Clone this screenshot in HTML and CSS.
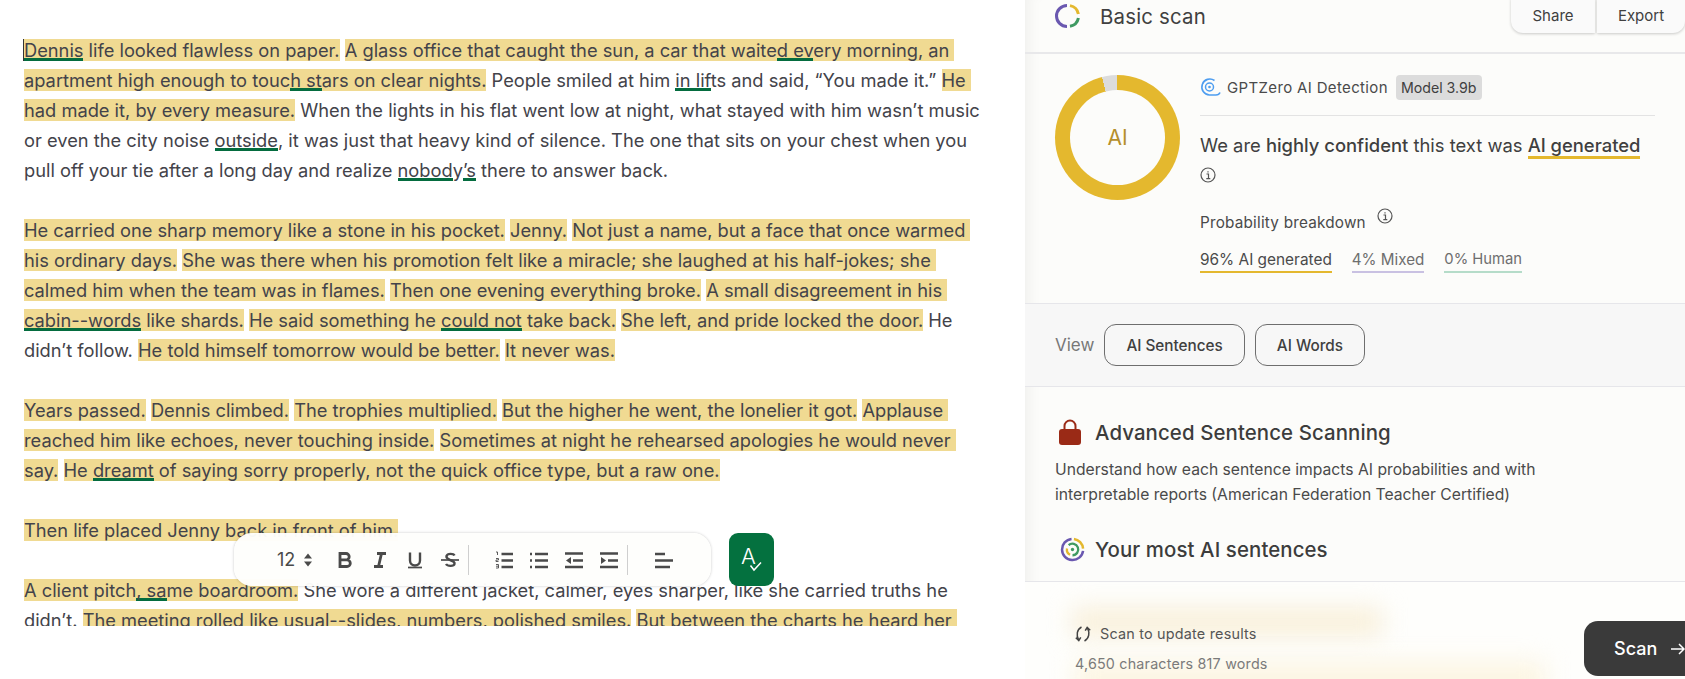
FILE: index.html
```html
<!DOCTYPE html>
<html lang="en">
<head>
<meta charset="utf-8">
<title>Basic scan</title>
<link rel="stylesheet" href="styles.css">
</head>
<body>
<div class="page">
  <main class="editor">
    <div class="doc">
      <p><span class="hl"><u class="g caret">Dennis</u> life looked flawless on paper.</span> <span class="hl">A glass office that caught the sun, a car that waite<u class="g">d ev</u>ery morning, an<i class="tr"></i> apartment high enough to touc<u class="g">h st</u>ars on clear nights.</span> People smiled at him <u class="g">in lif</u>ts and said, “You made it.” <span class="hl">He<i class="tr"></i> had made it, by every measure.</span> When the lights in his flat went low at night, what stayed with him wasn’t music or even the city noise <u class="g">outside</u>, it was just that heavy kind of silence. The one that sits on your chest when you pull off your tie after a long day and realize <u class="g">nobod</u>y<u class="g">’s</u> there to answer back.</p>
      <p><span class="hl">He carried one sharp memory like a stone in his pocket.</span> <span class="hl">Jenny.</span> <span class="hl">Not just a name, but a face that once warmed<i class="tr"></i> his ordinary days.</span> <span class="hl">She was there when his promotion felt like a miracle; she laughed at his half-jokes; she<i class="tr"></i> calmed him when the team was in flames.</span> <span class="hl">Then one evening everything broke.</span> <span class="hl">A small disagreement in his<i class="tr"></i> <u class="g">cabin--words</u> like shards.</span> <span class="hl">He said something he <u class="g">could not</u> take back.</span> <span class="hl">She left, and pride locked the door.</span> He didn’t follow. <span class="hl">He told himself tomorrow would be better.</span> <span class="hl">It never was.</span></p>
      <p><span class="hl">Years passed.</span> <span class="hl">Dennis climbed.</span> <span class="hl">The trophies multiplied.</span> <span class="hl">But the higher he went, the lonelier it got.</span> <span class="hl">Applause<i class="tr"></i> reached him like echoes, never touching inside.</span> <span class="hl">Sometimes at night he rehearsed apologies he would never<i class="tr"></i> say.</span> <span class="hl">He <u class="g">dreamt</u> of saying sorry properly, not the quick office type, but a raw one.</span></p>
      <p><span class="hl">Then life placed Jenny back in front of him.</span></p>
      <p><span class="hl">A client pitch<u class="g">, sa</u>me boardroom.</span> She wore a different jacket, calmer, eyes sharper, like she carried truths he didn’t. <span class="hl">The meeting rolled like usual--slides, numbers, polished smiles.</span> <span class="hl">But between the charts he heard her<i class="tr"></i></span></p>
    </div>

    <div class="toolbar">
      <span class="size">12</span>
      <svg class="updown" viewBox="0 0 10 16"><path d="M5 1.500l4 5H1zM5 14.500l4-5H1z"/></svg>
      <span class="tools tools-a">
        <svg class="ic" viewBox="0 0 18 18"><path d="M4 2.500h6a3.200 3.200 0 0 1 0 6.400H4zM4 8.900h7a3.300 3.300 0 0 1 0 6.600H4z" class="st bold"/></svg>
        <svg class="ic" viewBox="0 0 18 18"><path d="M6 2.500h9M3 15.500h9M10.500 2.500l-3 13" class="st bold"/></svg>
        <svg class="ic" viewBox="0 0 18 18"><path d="M4 1.500v8a5 5 0 0 0 10 0v-8" class="st"/><path d="M2 16.500h14" class="st thin"/></svg>
        <svg class="ic" viewBox="0 0 18 18"><path d="M13.500 4.500c-1-2-7-2.500-8 .5-.6 2 1.500 3 3.500 4 3 1 5 2 4.500 4-.6 2.500-7 2.500-8.500 0" class="st"/><path d="M0 9h18" class="st thin"/></svg>
      </span>
      <span class="sep"></span>
      <span class="tools tools-b">
        <svg class="ic" viewBox="0 0 18 18"><path d="M6.500 3H18M6.500 9.500H18M6.500 16H18" class="st"/><path d="M1 1h1.500v3M1 7.500h2.500v1.500H1v1.500h2.500M1 13.500h2.500v3.500H1M1 15.200h2.500" class="st hair"/></svg>
        <svg class="ic" viewBox="0 0 18 18"><path d="M5 3h13M5 9.500h13M5 16h13" class="st"/><path d="M0 3h2M0 9.500h2M0 16h2" class="st"/></svg>
        <svg class="ic" viewBox="0 0 18 18"><path d="M0 2.500h18M8 9.500h10M0 16h18" class="st"/><path d="M6 6v7L1 9.500z"/></svg>
        <svg class="ic" viewBox="0 0 18 18"><path d="M0 2.500h18M8 9.500h10M0 16h18" class="st"/><path d="M1 6v7L6 9.500z"/></svg>
      </span>
      <span class="sep"></span>
      <svg class="ic align" viewBox="0 0 18 18"><path d="M0 3h10M0 9.500h18M0 16h15" class="st"/></svg>
    </div>

    <button class="spell" type="button">
      <svg viewBox="0 0 30 34" width="30" height="34"><text x="4" y="20.500" class="spell-a">A</text><path d="M13.500 22.500l3.500 4.500 7-7.500" class="spell-check"/></svg>
    </button>
  </main>

  <aside class="panel">
    <header class="head">
      <div class="brand">
        <svg class="logo" viewBox="0 0 26 26">
          <path d="M12 2.500A10.500 10.500 0 0 0 12 23.500" class="arc purple"/>
          <path d="M15 2.600A10.500 10.500 0 0 1 23.400 11" class="arc yellow"/>
          <path d="M23.400 15A10.500 10.500 0 0 1 15 23.300" class="arc green"/>
        </svg>
        <h1>Basic scan</h1>
      </div>
      <div class="head-btns">
        <button class="hbtn share" type="button">Share</button>
        <button class="hbtn export" type="button">Export</button>
      </div>
    </header>

    <section class="result">
      <div class="donut"><span>AI</span></div>
      <div class="summary">
        <div class="det">
          <svg class="gz" viewBox="0 0 21 21"><circle cx="9.500" cy="10" r="4" fill="none" stroke="#4d9df0" stroke-width="1.500"/><circle cx="9.500" cy="10" r="1.300" fill="#4d9df0"/><path d="M14.500 3.500A8 8 0 1 0 9.500 18H16q3 0 4-2.500" fill="none" stroke="#4d9df0" stroke-width="1.600"/></svg>
          <span class="det-name">GPTZero AI Detection</span>
          <span class="badge">Model 3.9b</span>
        </div>
        <p class="verdict">We are <b>highly confident</b> this text was <b class="ai-u">AI generated</b></p>
        <svg class="info" viewBox="0 0 16 16"><circle cx="8" cy="8" r="7" /><path d="M6.500 7h2v4.500M6.300 11.700h4M8 4.200v1.200"/></svg>
        <div class="prob"><span>Probability breakdown</span><svg class="info" viewBox="0 0 16 16"><circle cx="8" cy="8" r="7" /><path d="M6.500 7h2v4.500M6.300 11.700h4M8 4.200v1.200"/></svg></div>
        <div class="stats">
          <span class="stat s-ai">96% AI generated</span>
          <span class="stat s-mixed">4% Mixed</span>
          <span class="stat s-human">0% Human</span>
        </div>
      </div>
    </section>

    <section class="view">
      <span class="view-l">View</span>
      <button class="vbtn" type="button">AI Sentences</button>
      <button class="vbtn" type="button">AI Words</button>
    </section>

    <section class="adv">
      <div class="adv-t">
        <svg class="lock" viewBox="0 0 22 26"><path d="M5.500 12V7a5.500 5.500 0 0 1 11 0v5" fill="none" stroke="#9a2a16" stroke-width="2"/><rect x="0" y="10" width="22" height="16" rx="3" fill="#9a2a16"/></svg>
        <h2>Advanced Sentence Scanning</h2>
      </div>
      <p class="adv-p">Understand how each sentence impacts AI probabilities and with interpretable reports (American Federation Teacher Certified)</p>
      <div class="most">
        <svg class="most-i" viewBox="0 0 26 26">
          <path d="M14.500 2A11 11 0 0 1 24 12" class="arc2 yellow"/>
          <path d="M24 14.500A11 11 0 1 1 12 2" class="arc2 purple"/>
          <path d="M9 8.500A6 6 0 1 1 13 19" class="arc3 green"/>
          <path d="M10.500 18.500A6 6 0 0 1 7.300 12" class="arc3 yellow"/>
          <circle cx="13" cy="13" r="1.700" fill="#3f9a62"/>
        </svg>
        <h2>Your most AI sentences</h2>
      </div>
    </section>

    <footer class="foot">
      <span class="blob blob-a"></span>
      <span class="blob blob-b"></span>
      <div class="foot-txt">
        <div class="upd">
          <svg class="sync" viewBox="0 0 16 16"><path d="M6.500 1C2 3.500 .8 9 3.800 14.500M.8 11.800l3 2.700 2-3.200M9.500 15c4.500-2.500 5.700-8 2.700-13.500M15.200 4.200l-3-2.700-2 3.200" fill="none" stroke="#444" stroke-width="1.500"/></svg>
          <span>Scan to update results</span>
        </div>
        <div class="count">4,650 characters 817 words</div>
      </div>
      <button class="scan" type="button"><span>Scan</span><svg viewBox="0 0 16 16" width="16" height="16"><path d="M1 8h13M9 3l5 5-5 5" fill="none" stroke="#fff" stroke-width="1.500"/></svg></button>
    </footer>
  </aside>
</div>
</body>
</html>
```
FILE: styles.css
```css
* { box-sizing: border-box; }
html, body { margin: 0; padding: 0; height: 679px; overflow: hidden; background: #fff; }
body { font-family: Inter, "Liberation Sans", sans-serif; color: #3f3f3f; }
h1, h2, p { margin: 0; font-weight: 400; }
button { font-family: inherit; cursor: pointer; }

.page { display: flex; width: 1685px; height: 679px; overflow: hidden; }

/* Editor */
.editor { position: relative; flex: 0 0 1025px; height: 679px; background: #fff; }
.doc { height: 626px; overflow: hidden; padding: 35px 0 0 24px; width: 1010px; }
.doc p { width: 964px; font-size: 18.280px; line-height: 30px; margin-bottom: 30px; color: #43434a; }
.hl { background: #f0da92; }
.g { text-decoration: none; box-shadow: inset 0 -3px 0 #046c3f; }
.caret { border-left: 1px solid #333; margin-left: -1px; }
.tr { display: inline-block; width: 5px; height: 1px; }

.toolbar { position: absolute; left: 234px; top: 533px; width: 477px; height: 53px; display: flex; align-items: center; padding-left: 43px; background: rgba(254,254,252,.97); border-radius: 18px; box-shadow: 0 0 3px rgba(0,0,0,.22); }
.size { font-size: 18px; width: 26px; color: #4a4a4a; }
.updown { width: 10px; height: 16px; fill: #4a4a4a; }
.tools { display: flex; align-items: center; }
.tools-a { margin-left: 23px; gap: 17px; }
.tools-b { margin-left: 26px; gap: 17px; }
.ic { width: 18px; height: 18px; fill: #4a4a4a; }
.st { fill: none; stroke: #4a4a4a; stroke-width: 2.400; }
.st.bold { stroke-width: 2.800; }
.st.thin { stroke-width: 1.700; }
.st.hair { stroke-width: .9; }
.sep { width: 1px; height: 30px; background: #cfcfcf; margin-left: 9px; }
.align { margin-left: 27px; }

.spell { position: absolute; left: 729px; top: 533px; width: 45px; height: 53px; padding: 0; border: 0; border-radius: 9px; background: #04713f; display: flex; align-items: center; justify-content: center; }
.spell-a { font-size: 22px; fill: #fff; font-family: Inter, sans-serif; font-weight: 300; }
.spell-check { fill: none; stroke: #fff; stroke-width: 1.500; }

/* Panel */
.panel { flex: 1; min-width: 0; height: 679px; display: flex; flex-direction: column; background: #fcfcfa; box-shadow: inset 14px 0 14px -10px rgba(0,0,0,.05); }
.head { flex: 0 0 54px; display: flex; justify-content: space-between; align-items: flex-start; border-bottom: 2px solid #e8e8ea; padding-left: 30px; }
.brand { display: flex; align-items: center; height: 32px; }
.logo { width: 26px; height: 26px; margin-right: 19px; }
.arc { fill: none; stroke-width: 3; }
.arc2 { fill: none; stroke-width: 2.600; }
.arc3 { fill: none; stroke-width: 2.400; }
.purple { stroke: #6a58b0; }
.yellow { stroke: #e4b82e; }
.green { stroke: #3f9a62; }
.brand h1 { font-size: 20.400px; letter-spacing: .2px; color: #404040; }
.head-btns { display: flex; gap: 2px; margin-top: -2px; }
.hbtn { height: 35px; border: 0; background: #fafafa; font-size: 15px; color: #404040; box-shadow: 0 1px 3px rgba(0,0,0,.2); }
.share { width: 84px; border-radius: 0 0 0 12px; }
.export { width: 88px; border-radius: 0 0 12px 0; }

.result { flex: 0 0 249px; display: flex; padding: 20px 30px 0 30px; }
.donut { flex: 0 0 125px; height: 125px; border-radius: 50%; background: conic-gradient(#e4b82e 0 345.500deg, #dcdcdc 345.500deg 360deg); display: flex; align-items: center; justify-content: center; position: relative; margin-top: 1px; }
.donut::before { content: ""; position: absolute; inset: 15px; border-radius: 50%; background: #fcfcfa; }
.donut span { position: relative; font-size: 21px; color: #b58f2c; }
.summary { margin-left: 20px; flex: 1; }
.det { display: flex; align-items: center; height: 42px; border-bottom: 1px solid #e3e3e3; padding-bottom: 15px; }
.gz { width: 21px; height: 21px; }
.det-name { font-size: 15px; margin-left: 6px; color: #4a4a4a; letter-spacing: .35px; }
.badge { margin-left: 8px; height: 25px; line-height: 25px; padding: 0 5px; background: #dcdcdc; border-radius: 4px; font-size: 14.200px; color: #404040; }
.verdict { margin-top: 16px; font-size: 18.400px; line-height: 26px; white-space: nowrap; }
.verdict b { font-weight: 500; }
.ai-u { display: inline-block; line-height: 22px; border-bottom: 3px solid #e4b82e; }
.info { display: block; width: 16px; height: 16px; fill: none; stroke: #555; stroke-width: 1.200; margin-top: 8px; }
.prob { display: flex; align-items: flex-start; margin-top: 25px; font-size: 15.300px; color: #4a4a4a; letter-spacing: .2px; height: 24px; }
.prob span { padding-top: 5px; }
.prob .info { margin: 0 0 0 11px; }
.stats { display: flex; gap: 20px; margin-top: 16px; font-size: 15.400px; }
.stat { padding-bottom: 0; line-height: 23px; border-bottom: 2px solid; }
.s-ai { border-color: #e4b82e; color: #4a4a4a; }
.s-mixed { border-color: #c9c1e2; color: #6e6e6e; font-size: 15.200px; }
.s-human { border-color: #b5dcc9; color: #6e6e6e; font-size: 14.800px; }

.view { flex: 0 0 84px; display: flex; align-items: center; padding-left: 30px; background: #f7f7f7; border-top: 1px solid #e6e6ea; border-bottom: 1px solid #e6e6ea; }
.view-l { font-size: 17px; color: #777; margin-right: 10px; }
.vbtn { height: 42px; padding: 0 21px; margin-right: 10px; background: transparent; border: 1px solid #6e6e6e; border-radius: 12px; font-size: 15.300px; font-weight: 500; color: #404040; }

.adv { flex: 0 0 194px; padding: 32px 30px 0 30px; }
.adv-t { display: flex; align-items: center; padding-left: 4px; }
.lock { width: 22px; height: 26px; margin-right: 14px; }
.adv h2 { font-size: 20.400px; font-weight: 500; letter-spacing: .1px; color: #3c3c3c; }
.adv-p { width: 540px; margin-top: 12px; font-size: 15.700px; line-height: 25px; color: #4a4a4a; }
.most { display: flex; align-items: center; margin-top: 30px; padding-left: 5px; }
.most-i { width: 25px; height: 25px; margin-right: 10px; }

.foot { position: relative; flex: 1; display: flex; justify-content: space-between; background: #fefefc; border-top: 1px solid #e6e6ea; overflow: hidden; }
.blob { position: absolute; background: #f8efd9; filter: blur(12px); }
.blob-a { left: 47px; top: 26px; width: 310px; height: 28px; }
.blob-b { left: 50px; top: 80px; width: 470px; height: 40px; background: #fcf5e2; }
.foot-txt { position: relative; padding: 41px 0 0 50px; }
.upd { display: flex; align-items: center; gap: 9px; font-size: 14.400px; color: #555; letter-spacing: .2px; line-height: 22px; }
.sync { width: 16px; height: 16px; }
.count { margin-top: 8px; font-size: 14.300px; color: #7b7b7b; letter-spacing: .2px; line-height: 22px; }
.scan { position: relative; flex: 0 0 130px; height: 55px; margin-top: 39px; margin-right: -29px; padding: 0 0 0 30px; border: 0; border-radius: 14px; background: #3a3a3a; color: #fff; font-size: 18px; font-weight: 500; display: flex; align-items: center; gap: 13px; }
```
